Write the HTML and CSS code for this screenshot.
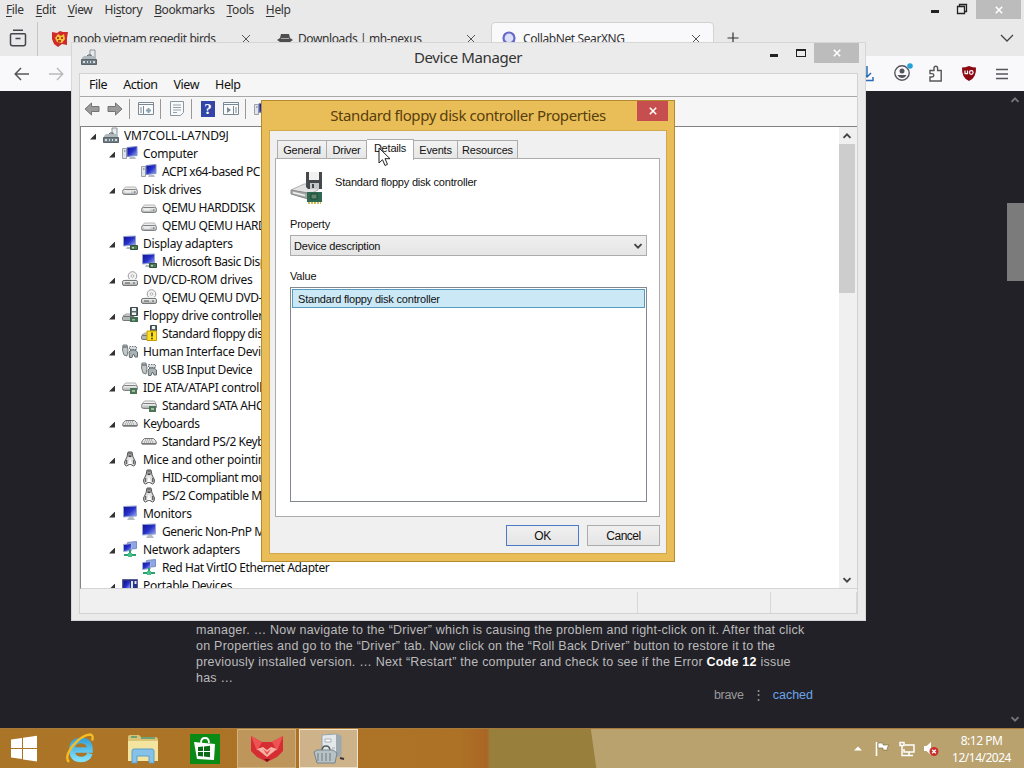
FILE: index.html
```html
<!DOCTYPE html>
<html lang="en">
<head>
    <meta charset="UTF-8" />
    <meta name="viewport" content="width=device-width, initial-scale=1.0">
    <title>Device Manager</title>
    <link rel="stylesheet" href="styles.css">
</head>
<body>
    <!-- Shared icons -->
    <svg class="sprite" width="0" height="0">
        <defs>
            <linearGradient id="screen" x1="0" y1="0" x2="1" y2="1">
                <stop offset="0" stop-color="#10108e" />
                <stop offset="0.5" stop-color="#2630c8" />
                <stop offset="1" stop-color="#9db4f4" />
            </linearGradient>
            <linearGradient id="metal" x1="0" y1="0" x2="0" y2="1">
                <stop offset="0" stop-color="#fafafa" />
                <stop offset="1" stop-color="#a4a8aa" />
            </linearGradient>
            <linearGradient id="ie" x1="0" y1="0" x2="0" y2="1">
                <stop offset="0" stop-color="#3aa5dc" />
                <stop offset="1" stop-color="#7fe0fa" />
            </linearGradient>
            <symbol id="i-root" viewBox="0 0 16 16">
                <path d="M9 7V1h5v8" fill="#e6eaec" stroke="#8b9499" />
                <path d="M5 9l2-3h3l1 3" fill="none" stroke="#4d585e" />
                <path d="M1 9l2-2h10l2 2v2H1z" fill="#aeb8bd" />
                <path d="M.5 10.5h15v5H.5z" fill="#707c83" stroke="#59656b" />
                <path d="M2 13h2m2 0h1m2 0h1m2 0h2" stroke="#d4dcdf" stroke-width="2" />
            </symbol>
            <symbol id="i-computer" viewBox="0 0 16 16">
                <path d="M.5 3.5h4v10h-4z" fill="#e1e4e6" stroke="#9aa0a4" />
                <path d="M2 6h1.500" stroke="#666" />
                <path d="M5 2.500l10-1v9l-10 1z" fill="url(#screen)" stroke="#7d8fc0" />
                <path d="M8 12h5l1 2H7z" fill="#b6bcc4" />
            </symbol>
            <symbol id="i-monitor" viewBox="0 0 16 16">
                <path d="M1.500 1.500l13-.5v10l-13 1z" fill="url(#screen)" stroke="#98a6cf" />
                <path d="M7 12h4l2 3H5z" fill="#b5bbc4" />
            </symbol>
            <symbol id="i-display" viewBox="0 0 16 16">
                <path d="M1.500 1.500l12-.5v9l-12 1z" fill="url(#screen)" stroke="#98a6cf" />
                <path d="M5 12h4v2H4z" fill="#b5bbc4" />
                <path d="M8.500 10.500h7v4h-7z" fill="#4d7a52" stroke="#33503a" />
                <path d="M10 12h2v1.500h-2z" fill="#b9cfb6" />
            </symbol>
            <symbol id="i-disk" viewBox="0 0 16 16">
                <path d="M1 9l2.500-3h10L15 9z" fill="#ededed" stroke="#b5b5b5" />
                <rect x=".5" y="8.500" width="15" height="5" rx="2" fill="url(#metal)" stroke="#808080" />
                <path d="M3 11h6" stroke="#fff" />
                <path d="M12 11h1.500" stroke="#555" />
            </symbol>
            <symbol id="i-dvd" viewBox="0 0 16 16">
                <circle cx="10.500" cy="5" r="4.300" fill="#f2f2f2" stroke="#9c9c9c" />
                <circle cx="10.500" cy="5" r="1.300" fill="#fff" stroke="#b2b2b2" />
                <path d="M1 10l3-2h9l2 2z" fill="#ededed" />
                <rect x=".5" y="9.500" width="15" height="5" rx="1.500" fill="url(#metal)" stroke="#777" />
                <path d="M3 12h5m3 0h2" stroke="#555" />
            </symbol>
            <symbol id="i-floppy" viewBox="0 0 16 16">
                <path d="M1 9l3-2h6v2z" fill="#e8e8e8" stroke="#999" />
                <rect x=".5" y="9.500" width="12" height="4" rx="1" fill="#b2b8b5" stroke="#777" />
                <path d="M8.500.5h7v8h-7z" fill="#596a6a" stroke="#3d4949" />
                <path d="M10 1h4v3h-4zM10 5.500h4V8h-4z" fill="#eef1f1" />
                <path d="M8 10h8v5H8z" fill="#3d6c50" />
                <path d="M10 12h3v1.500h-3z" fill="#9abda0" />
            </symbol>
            <symbol id="i-warn" viewBox="0 0 16 16">
                <path d="M1 10l3-2h6v2z" fill="#e8e8e8" stroke="#999" />
                <rect x=".5" y="10.500" width="10" height="4" rx="1" fill="#b2b8b5" stroke="#777" />
                <path d="M9.500.5h6v7h-6z" fill="#596a6a" stroke="#3d4949" />
                <path d="M11 1h3v3h-3z" fill="#eef1f1" />
                <path d="M6 6h9.500v9.500H6z" fill="#fde01c" stroke="#c69a00" />
                <path d="M11 7.500v4m0 1.200v1.500" stroke="#222" stroke-width="1.500" />
            </symbol>
            <symbol id="i-hid" viewBox="0 0 16 16">
                <path d="M1 2h4l1 5-1 6-3-1-1.500-5z" fill="#c2c8ca" stroke="#757d80" />
                <path d="M1 4h4" stroke="#555" />
                <path d="M7.500 3.500h7v3h-7z" fill="#d7dcde" stroke="#707a7e" stroke-dasharray="1.500 1" />
                <path d="M7 9l2-2h4l2.500 2v5H13l-1-2.500h-1L10 14.500H7.500z" fill="#aab2b5" stroke="#606a6e" />
            </symbol>
            <symbol id="i-ide" viewBox="0 0 16 16">
                <path d="M1 7l2.500-3h10L15 7z" fill="#f2f2f2" stroke="#adadad" />
                <rect x=".5" y="6.500" width="15" height="5" rx="2" fill="url(#metal)" stroke="#808080" />
                <path d="M8 9h7v6H8z" fill="#4d7658" />
                <path d="M10 11h3v2h-3z" fill="#9ebda2" />
            </symbol>
            <symbol id="i-keyboard" viewBox="0 0 16 16">
                <path d="M3.500 5.500h9q3 2 3 5H.5q0-3 3-5z" fill="#e2e2e2" stroke="#777" />
                <path d="M4 7h8M3 9h10" stroke="#888" stroke-dasharray="1 1" />
                <path d="M1 11.500h14" stroke="#9b9b9b" />
            </symbol>
            <symbol id="i-mouse" viewBox="0 0 16 16">
                <path d="M6 1h4l1 5 2.500 5q0 4-2 4L8 13l-3.500 2q-2 0-2-4L5 6z" fill="#dedede" stroke="#555" />
                <path d="M8 7l2 6H6z" fill="#fff" />
                <path d="M4.500 9v4M11.700 9v4" stroke="#666" stroke-width="1.500" fill="none" />
                <path d="M6.500 1.500h3V6h-3z" fill="#444" />
                <path d="M8 2.500v2" stroke="#fff" />
            </symbol>
            <symbol id="i-network" viewBox="0 0 16 16">
                <path d="M5.500 1.500l9-1v7l-9 1z" fill="#8da7e6" stroke="#7c8fc2" />
                <path d="M1.500 3.500l8-1v7l-8 1z" fill="url(#screen)" stroke="#a5b3d8" />
                <path d="M8 9v4M2 14h12" stroke="#2ba069" stroke-width="2" />
                <path d="M6 12h4v4H6z" fill="#46c189" />
            </symbol>
            <symbol id="i-portable" viewBox="0 0 16 16">
                <path d="M.5 2.500h15v12H.5z" fill="#28318c" stroke="#596188" />
                <path d="M2 4h6v8H2z" fill="url(#screen)" />
                <path d="M9 4h2v9H9zM12.500 4h2v3h-2z" fill="#e1e5ee" />
            </symbol>
            <symbol id="i-x" viewBox="0 0 10 10">
                <path d="M1 1l8 8M9 1L1 9" fill="none" stroke="currentColor" />
            </symbol>
            <symbol id="i-chevron" viewBox="0 0 10 10">
                <path d="M1.500 3.200L5 6.700l3.500-3.500" fill="none" stroke="currentColor" stroke-width="1.900" />
            </symbol>
        </defs>
    </svg>

    <div class="desktop">
        <div class="browser">
            <div class="menubar">
                <span><u>F</u>ile</span>
                <span><u>E</u>dit</span>
                <span><u>V</u>iew</span>
                <span>Hi<u>s</u>tory</span>
                <span><u>B</u>ookmarks</span>
                <span><u>T</u>ools</span>
                <span><u>H</u>elp</span>
                <div class="window-buttons browser-buttons">
                    <i class="minimize"></i>
                    <svg width="12" height="12"><path d="M1.500 3.500h7v7h-7zM3.500 3V1.500h7v7H9" fill="none" stroke="#222" stroke-width="1.300" /></svg>
                    <b class="close"><svg width="8" height="8"><use href="#i-x" stroke-width="2" /></svg></b>
                </div>
            </div>

            <div class="tabstrip">
                <div class="view-button">
                    <svg width="18" height="18" viewBox="0 0 18 18" fill="none" stroke="#45454d" stroke-width="1.500"><path d="M4 1.200h10M2.500 4.700h13q1 0 1 1v9q0 2-2 2h-11q-2 0-2-2v-9q0-1 1-1zM6.500 9.500h5" /></svg>
                </div>
                <div class="tab">
                    <svg width="16" height="16" viewBox="0 0 16 16"><path d="M0 1l5 1 3-2 3 1 5 0-1 6 0 7-5-1-4 3-4-3-2-5z" fill="#cf2b2b" /><path d="M3 7l3-4 3 2 3-2 1 5-3 4-5-1z" fill="#f4c33a" /><path d="M5 7h2m2 0h2M6 10h3" stroke="#a11b1b" stroke-width="1.500" /></svg>
                    <span class="tab-text">noob vietnam regedit birds</span>
                    <svg class="tab-close" width="10" height="10"><use href="#i-x" /></svg>
                </div>
                <div class="tab tab-two">
                    <svg width="16" height="16" viewBox="0 0 16 16"><path d="M4 3h8l1 4H3zM0 9q3-3 8-2 5-1 8 2l-3 2H3z" fill="#4d4d4f" /><path d="M4 7.500h8" stroke="#aaa" /></svg>
                    <span class="tab-text">Downloads | mh-nexus</span>
                    <svg class="tab-close" width="10" height="10"><use href="#i-x" /></svg>
                </div>
                <div class="tab active">
                    <svg width="16" height="16" viewBox="0 0 16 16"><circle cx="7" cy="7" r="5.500" fill="#dce0fa" stroke="#6869c9" stroke-width="2.200" /><path d="M11 11l4 4" stroke="#4548b8" stroke-width="2.500" /></svg>
                    <span class="tab-text">CollabNet SearXNG</span>
                    <svg class="tab-close" width="10" height="10"><use href="#i-x" /></svg>
                </div>
                <svg class="new-tab" width="12" height="12"><path d="M6 .5v11M.5 6h11" stroke="#333" stroke-width="1.200" /></svg>
                <svg class="all-tabs" width="14" height="8"><path d="M1 1l6 6 6-6" fill="none" stroke="#444" stroke-width="1.300" /></svg>
            </div>

            <div class="navbar">
                <svg width="16" height="14" viewBox="0 0 16 14" fill="none" stroke="#55555c" stroke-width="1.500"><path d="M15 7H1.500M7 1L1.200 7 7 13" /></svg>
                <svg class="forward" width="16" height="14" viewBox="0 0 16 14" fill="none" stroke="#b9b9bd" stroke-width="1.400"><path d="M1 7h13.500M9 1l5.800 6L9 13" /></svg>
                <div class="nav-right">
                    <svg width="14" height="16" viewBox="0 0 14 16" fill="none" stroke="#2a6cb8" stroke-width="1.500"><path d="M7 0v11M3 7l4 4 4-4M1 11v3.500h12V11" /></svg>
                    <svg class="account" width="20" height="20" viewBox="0 0 20 20"><circle cx="9" cy="11" r="7.200" fill="none" stroke="#55555c" stroke-width="1.400" /><circle cx="9" cy="9" r="2.500" fill="#55555c" /><path d="M4.500 13h9q-1.500 3-4.500 3t-4.500-3z" fill="#55555c" /><circle cx="17" cy="4" r="2.800" fill="#26a0d8" /></svg>
                    <svg class="puzzle" width="16" height="17" viewBox="0 0 16 17" fill="none" stroke="#55555c" stroke-width="1.400"><path d="M2 5.500h4V3q0-1.800 1.800-1.800T9.600 3v2.500h3.600V16H2v-4h2q1.800 0 1.800-1.700T4 8.600H2z" /></svg>
                    <svg class="ublock" width="16" height="17" viewBox="0 0 16 17"><path d="M8 1q4 1.500 7 1.500Q15.500 13 8 16 .5 13 1 2.500 4 2.500 8 1z" fill="#8c0812" /><path d="M4 5.500v3.200h2.500V5.500" fill="none" stroke="#fff" stroke-width="1.200" /><circle cx="10.300" cy="7.500" r="1.800" fill="none" stroke="#fff" stroke-width="1.200" /></svg>
                    <svg class="burger" width="12" height="12"><path d="M0 1.500h12M0 6h12M0 10.500h12" stroke="#55555c" stroke-width="1.300" /></svg>
                </div>
            </div>

            <div class="page">
                <div class="result">
                    <p>
                        <span class="line">manager. … Now navigate to the “Driver” which is causing the problem and right-click on it. After that click</span>
                        <span class="line">on Properties and go to the “Driver” tab. Now click on the “Roll Back Driver” button to restore it to the</span>
                        <span class="line">previously installed version. … Next “Restart” the computer and check to see if the Error <strong>Code 12</strong> issue</span>
                        <span class="line">has …</span>
                    </p>
                    <div class="engines"><span>brave</span><i>⋮</i><a>cached</a></div>
                </div>
                <div class="page-scroll">
                    <svg class="flip" width="10" height="10"><use href="#i-chevron" /></svg>
                    <div class="page-thumb"></div>
                    <svg width="10" height="10"><use href="#i-chevron" /></svg>
                </div>
            </div>
        </div>

        <!-- Device Manager window -->
        <div class="devmgr">
            <div class="titlebar">
                <svg class="title-icon" width="16" height="16"><use href="#i-root" /></svg>
                <span class="title">Device Manager</span>
                <div class="window-buttons">
                    <i class="minimize"></i>
                    <i class="maximize"></i>
                    <b class="close"><svg width="8" height="8"><use href="#i-x" stroke-width="2" /></svg></b>
                </div>
            </div>
            <div class="client">
                <div class="app-menu"><span>File</span><span>Action</span><span>View</span><span>Help</span></div>
                <div class="toolbar">
                    <svg width="16" height="16"><path d="M1 8l6.500-6v3.500H15v5H7.500V14z" fill="#9b9b9b" stroke="#747474" /></svg>
                    <svg class="tb-forward" width="16" height="16"><path d="M15 8L8.500 2v3.500H1v5h7.500V14z" fill="#9b9b9b" stroke="#747474" /></svg>
                    <i class="sep"></i>
                    <svg width="16" height="16"><path d="M.5 1.500h15v12H.5z" fill="#f9fafb" stroke="#7d8992" /><path d="M1 3.500h14M5.500 5v9M2 7h2M2 9h2M2 11h2" stroke="#7d8992" /><path d="M8 9.500h5M10.500 7v5" stroke="#8aa1b2" stroke-width="2" /></svg>
                    <i class="sep"></i>
                    <svg width="16" height="16"><path d="M1.500.5h13v11l-3 3h-10z" fill="#f9fafb" stroke="#8c969d" /><path d="M4 4h8M4 6.500h8M4 9h8M4 11.500h4" stroke="#95a1a9" /></svg>
                    <i class="sep"></i>
                    <span class="help">?</span>
                    <svg class="tb-panel" width="16" height="16"><path d="M.5 1.500h15v12H.5z" fill="#f9fafb" stroke="#7d8992" /><path d="M1 3.500h14M10.500 5v9M12 7h2M12 9h2M12 11h2" stroke="#7d8992" /><path d="M4 6l4 3-4 3z" fill="#7a8a96" /></svg>
                    <i class="sep"></i>
                    <svg width="16" height="16"><use href="#i-computer" /></svg>
                </div>
                <div class="tree-wrap">
                    <ul class="tree">
                        <li class="root"><i></i><svg><use href="#i-root" /></svg>VM7COLL-LA7ND9J</li>
                        <li class="group"><i></i><svg><use href="#i-computer" /></svg>Computer</li>
                        <li class="device"><svg><use href="#i-computer" /></svg>ACPI x64-based PC</li>
                        <li class="group"><i></i><svg><use href="#i-disk" /></svg>Disk drives</li>
                        <li class="device"><svg><use href="#i-disk" /></svg>QEMU HARDDISK</li>
                        <li class="device"><svg><use href="#i-disk" /></svg>QEMU QEMU HARDDISK</li>
                        <li class="group"><i></i><svg><use href="#i-display" /></svg>Display adapters</li>
                        <li class="device"><svg><use href="#i-display" /></svg>Microsoft Basic Display Adapter</li>
                        <li class="group"><i></i><svg><use href="#i-dvd" /></svg>DVD/CD-ROM drives</li>
                        <li class="device"><svg><use href="#i-dvd" /></svg>QEMU QEMU DVD-ROM</li>
                        <li class="group"><i></i><svg><use href="#i-floppy" /></svg>Floppy drive controllers</li>
                        <li class="device"><svg><use href="#i-warn" /></svg>Standard floppy disk controller</li>
                        <li class="group"><i></i><svg><use href="#i-hid" /></svg>Human Interface Devices</li>
                        <li class="device"><svg><use href="#i-hid" /></svg>USB Input Device</li>
                        <li class="group"><i></i><svg><use href="#i-ide" /></svg>IDE ATA/ATAPI controllers</li>
                        <li class="device"><svg><use href="#i-ide" /></svg>Standard SATA AHCI Controller</li>
                        <li class="group"><i></i><svg><use href="#i-keyboard" /></svg>Keyboards</li>
                        <li class="device"><svg><use href="#i-keyboard" /></svg>Standard PS/2 Keyboard</li>
                        <li class="group"><i></i><svg><use href="#i-mouse" /></svg>Mice and other pointing devices</li>
                        <li class="device"><svg><use href="#i-mouse" /></svg>HID-compliant mouse</li>
                        <li class="device"><svg><use href="#i-mouse" /></svg>PS/2 Compatible Mouse</li>
                        <li class="group"><i></i><svg><use href="#i-monitor" /></svg>Monitors</li>
                        <li class="device"><svg><use href="#i-monitor" /></svg>Generic Non-PnP Monitor</li>
                        <li class="group"><i></i><svg><use href="#i-network" /></svg>Network adapters</li>
                        <li class="device"><svg><use href="#i-network" /></svg>Red Hat VirtIO Ethernet Adapter</li>
                        <li class="group"><i></i><svg><use href="#i-portable" /></svg>Portable Devices</li>
                    </ul>
                    <div class="scrollbar">
                        <svg class="flip" width="10" height="10"><use href="#i-chevron" /></svg>
                        <div class="thumb"></div>
                        <svg width="10" height="10"><use href="#i-chevron" /></svg>
                    </div>
                </div>
                <div class="statusbar"><span></span><span></span><span></span></div>
            </div>
        </div>

        <!-- Properties dialog -->
        <div class="dialog">
            <div class="dialog-title">
                Standard floppy disk controller Properties
                <b class="dialog-close"><svg width="8" height="8"><use href="#i-x" stroke-width="2" /></svg></b>
            </div>
            <div class="dialog-body">
                <div class="prop-tabs">
                    <span class="t-general">General</span>
                    <span class="t-driver">Driver</span>
                    <span class="t-details">Details</span>
                    <span class="t-events">Events</span>
                    <span class="t-resources">Resources</span>
                </div>
                <div class="panel">
                    <div class="device-head">
                        <svg width="34" height="34" viewBox="0 0 34 34">
                            <path d="M1 19l13-6h14v6l-10 5z" fill="#e3e3e3" stroke="#b0b0b0" />
                            <path d="M1 19l17 3v6L1 23z" fill="#a4a8a8" stroke="#8a8a8a" />
                            <path d="M3 21.500l12 3" stroke="#f2f2f2" stroke-width="1.500" />
                            <path d="M16 1h16v17H18l-2-2z" fill="#45494c" />
                            <path d="M19 1h10v8H19z" fill="#f1f1f1" />
                            <path d="M20 12h9v6h-9z" fill="#c3c7c9" />
                            <path d="M22 13h2v4h-2z" fill="#45494c" />
                            <path d="M17 21h15v10H17z" fill="#2f6850" />
                            <path d="M21 23h6v5h-6z" fill="#63866a" stroke="#1f4838" />
                            <path d="M18 32h13" stroke="#d1b956" stroke-width="2" stroke-dasharray="2 1" />
                        </svg>
                        <span>Standard floppy disk controller</span>
                    </div>
                    <label>Property</label>
                    <div class="select">Device description<svg width="10" height="10"><use href="#i-chevron" /></svg></div>
                    <label class="value-label">Value</label>
                    <div class="listbox"><div class="selected">Standard floppy disk controller</div></div>
                </div>
                <div class="actions"><button class="default">OK</button><button>Cancel</button></div>
            </div>
        </div>

        <div class="taskbar">
            <div class="apps">
                <svg class="start" width="28" height="28" viewBox="0 0 28 28" fill="#fff"><path d="M1 4.500l11-1.600V13H1zM13 2.700L27 .8V13H13zM1 14h11v10L1 22.500zM13 14h14v12.500l-14-2z" /></svg>
                <svg class="ie" width="32" height="32" viewBox="0 0 32 32"><path d="M25 20.500q-2 6-9 6-9 0-9-9.500t9-9.500q9 0 9 9.500H10" fill="none" stroke="url(#ie)" stroke-width="5.500" /><path d="M4 29Q-1 24 8 12.500 17 2 25 1.500q4 .5 2 6" fill="none" stroke="#f6bd22" stroke-width="2.300" /></svg>
                <svg class="explorer" width="32" height="30" viewBox="0 0 32 30"><path d="M1 3q0-2 2-2h9l2 2h14q3 0 3 3v21H1z" fill="#d9c374" /><path d="M4 3h6M14 4h14" stroke="#6da377" stroke-width="2" /><path d="M1 7h30v20H1z" fill="#f3e4a0" /><path d="M5 29V17q0-2 2-2h18q2 0 2 2v12h-5v-7H10v7z" fill="#86c2e8" stroke="#5d9ec9" /></svg>
                <svg class="store" width="30" height="30" viewBox="0 0 30 30"><path d="M0 0h30v30H0z" fill="#0c8a16" /><path d="M11 9q0-5 4-5t4 5" fill="none" stroke="#fff" stroke-width="1.800" /><path d="M4 8l21 2-1 16-17-1z" fill="#fff" /><path d="M8 13l5-.5v4.500H8zM14 12.400l6-.6V17h-6zM8 18h5v4.500L8 22zM14 18h6v5.200l-6-.6z" fill="#0c6a16" /></svg>
                <div class="task fox-task">
                    <svg width="34" height="28" viewBox="0 0 34 28"><path d="M1 1l11 6h10l11-6v15l-6 6-10 5-10-5-6-6z" fill="#d52d32" /><path d="M1 1l11 6-5 9zM33 1L22 7l5 9z" fill="#ee5353" /><path d="M7 14l6-2 4 3 4-3 6 2-10 8z" fill="#f7b2a5" /><path d="M13 14l4 3 4-3-4 6z" fill="#e5504d" /><path d="M14 24h6l-3 3z" fill="#7a1019" /></svg>
                </div>
                <div class="task current">
                    <svg width="32" height="32" viewBox="0 0 32 32"><path d="M9 2l14-1 5 2v20H9z" fill="#e3e9eb" stroke="#9aa5a9" /><path d="M23 1v22h5V3z" fill="#9da9ae" /><path d="M12 6h6v3h-6zM19 15h3" fill="#fff" stroke="#a4aeb2" /><path d="M9 18q0-5 4-5t4 5" fill="none" stroke="#515c61" stroke-width="1.500" /><path d="M1 19l3-2h16l4 3-2 10H4z" fill="#b7c2c6" stroke="#76848a" /><path d="M5 20v8m4-8v8m4-8v8m4-8v8" stroke="#6c7a80" /><path d="M27 25l4 1" stroke="#333" stroke-width="2" /></svg>
                </div>
            </div>
            <div class="tray">
                <svg class="tray-up" width="8" height="5"><path d="M4 .5L8 4.500H0z" fill="#fff" /></svg>
                <svg class="flag" width="16" height="16"><path d="M2.500 1v14" stroke="#fff" stroke-width="1.600" /><path d="M4 2h5v2h6l-2 3 1 2H9V7H4z" fill="#fff" stroke="#77653d" stroke-width=".6" /></svg>
                <svg class="lan" width="16" height="16" fill="none" stroke="#fff" stroke-width="1.500"><path d="M6 4h9v7H5V8M10 11v3M6 14.500h8" /><path d="M1 1.500h4v3H1zM3 5v9.500h3" /></svg>
                <svg class="volume" width="16" height="16"><path d="M1 5h2.500L8 1v13l-4.500-4H1z" fill="#fff" /><circle cx="11" cy="10.500" r="4.500" fill="#c9302c" /><path d="M9.200 8.700l3.600 3.600M12.800 8.700l-3.600 3.600" stroke="#fff" stroke-width="1.300" /></svg>
                <div class="clock"><span>8:12 PM</span><span>12/14/2024</span></div>
            </div>
        </div>

        <svg class="cursor" width="13" height="20" viewBox="0 0 13 20"><path d="M1 1v15l3.500-3.300L7 18.500l2.500-1.200L7 11.700h5z" fill="#fff" stroke="#222" /></svg>
    </div>
</body>
</html>
```
FILE: styles.css
```css
* {
    box-sizing: border-box;
}

body {
    margin: 0;
    font-family: "Noto Sans", sans-serif;
    font-size: 12px;
    color: #111;
}

svg {
    display: block;
    flex: none;
}

.sprite {
    position: absolute;
}

.flip {
    transform: scaleY(-1);
}

.desktop {
    position: relative;
    width: 1024px;
    height: 768px;
    overflow: hidden;
    display: flex;
    flex-direction: column;
}

/* Browser */
.browser {
    height: 728px;
    display: flex;
    flex-direction: column;
    background: #e9e9e9;
}

.menubar {
    height: 22px;
    padding-left: 6px;
    display: flex;
    gap: 12px;
    line-height: 20px;
    font-size: 12px;
    letter-spacing: -0.38px;
    color: #333;
}

.menubar u {
    text-underline-offset: 2px;
}

.window-buttons {
    margin-left: auto;
    display: flex;
    align-items: flex-start;
}

.minimize {
    width: 8px;
    height: 3px;
    margin: 11px 18px 0 0;
    background: #222;
}

.maximize {
    width: 10px;
    height: 8px;
    margin: 6px 8px 0 0;
    border: 1px solid #222;
    border-top-width: 2px;
}

.close {
    width: 45px;
    height: 20px;
    display: flex;
    align-items: center;
    justify-content: center;
    background: #bcbcbc;
    color: #fff;
}

.browser-buttons {
    margin-right: 3px;
}

.browser-buttons .minimize {
    margin: 10px 17px 0 0;
}

.browser-buttons svg {
    margin: 3px 8px 0 0;
}

.browser-buttons .close svg {
    margin: 0;
}

.browser-buttons .close {
    height: 19px;
}

.tabstrip {
    height: 34px;
    display: flex;
    align-items: flex-start;
}

.view-button {
    width: 38px;
    height: 34px;
    padding: 7px 0 0 9px;
    border-right: 1px solid #c4c4c4;
}

.tab {
    width: 226px;
    height: 33px;
    padding: 0 13px 0 14px;
    display: flex;
    align-items: center;
    color: #333;
}

.tab-two {
    padding-left: 13px;
    width: 227px;
}

.tab-two .tab-close {
    margin-right: 2px;
}

.tab-text {
    flex: 1;
    padding-left: 5px;
    white-space: nowrap;
    letter-spacing: -0.4px;
}

.tab-close {
    color: #555;
}

.active {
    width: 223px;
    padding: 0 12px 0 10px;
    border: 1px solid #d2d2d2;
    border-radius: 4px 4px 0 0;
    background: #f9f9fb;
}

.new-tab {
    margin: 10px 0 0 13px;
}

.all-tabs {
    margin: 12px 10px 0 auto;
}

.navbar {
    height: 35px;
    padding: 0 16px 0 14px;
    display: flex;
    align-items: center;
    background: #f9f9fb;
}

.forward {
    margin-left: 18px;
}

.nav-right {
    margin-left: auto;
    display: flex;
    align-items: center;
}

.account {
    margin: -4px 0 0 19px;
}

.puzzle {
    margin-left: 15px;
}

.ublock {
    margin-left: 17px;
}

.burger {
    margin-left: 19px;
}

.page {
    height: 637px;
    display: flex;
    justify-content: space-between;
    align-items: stretch;
    background: #222128;
}

.result {
    width: 617px;
    margin: 531px 0 0 196px;
    font-family: "Liberation Sans", sans-serif;
    font-size: 12.500px;
    line-height: 16px;
    color: #bbb;
}

.result p {
    margin: 0;
}

.line {
    display: block;
    white-space: nowrap;
    letter-spacing: 0.23px;
}

.result strong {
    color: #fff;
}

.engines {
    margin-top: 1px;
    display: flex;
    justify-content: flex-end;
    color: #999;
}

.engines i {
    width: 29px;
    text-align: center;
    font-style: normal;
}

.engines span {
    letter-spacing: -0.3px;
}

.engines a {
    color: #6ba4e8;
}

.page-scroll {
    width: 17px;
    padding: 4px 0;
    display: flex;
    flex-direction: column;
    justify-content: space-between;
    color: #777;
}

.page-scroll svg {
    margin-left: 3px;
}

.page-thumb {
    height: 78px;
    margin: 98px 0 auto;
    background: #7b7b7b;
}

/* Device Manager */
.devmgr {
    position: absolute;
    left: 71px;
    top: 42px;
    width: 795px;
    height: 579px;
    padding: 0 7px 6px;
    border: 1px solid #d6d6d6;
    background: #ebebeb;
}

.titlebar {
    height: 30px;
    margin-right: -1px;
    display: flex;
    align-items: flex-start;
}

.title-icon {
    margin: 6px 0 0 2px;
}

.title {
    margin-left: 317px;
    font-size: 15px;
    line-height: 29px;
    letter-spacing: -0.4px;
    color: #333;
}

.client {
    height: 541px;
    display: flex;
    flex-direction: column;
    border: 1px solid #d2d2d2;
    background: #f0f0f0;
}

.app-menu {
    height: 22px;
    padding-left: 9px;
    display: flex;
    gap: 16px;
    line-height: 21px;
    font-size: 12.500px;
    letter-spacing: -0.45px;
    background: #f6f6f6;
}

.toolbar {
    height: 30px;
    padding: 0 0 5px 4px;
    display: flex;
    align-items: center;
    border-top: 1px solid #a8a8a8;
    background: #f6f6f6;
}

.tb-forward {
    margin-left: 7px;
}

.sep {
    width: 1px;
    height: 20px;
    margin: 0 8px 0 6px;
    background: #999;
}

.help {
    width: 14px;
    height: 16px;
    margin: 0 8px 0 1px;
    background: #3346a8;
    color: #fff;
    font: bold 15px/16px "Liberation Serif", serif;
    text-align: center;
}

.tree-wrap {
    height: 463px;
    display: flex;
    border: 1px solid #828282;
    border-width: 1px 0 1px 1px;
    border-bottom-color: #d5d5d5;
    background: #fff;
}

.tree {
    flex: 1;
    margin: -1px 0 0;
    padding: 0;
    list-style: none;
    overflow: hidden;
}

.tree li {
    height: 18px;
    display: flex;
    align-items: center;
    white-space: nowrap;
}

.tree svg {
    width: 16px;
    height: 16px;
    margin-right: 5px;
}

.tree i {
    width: 6px;
    height: 6px;
    margin: 3px 7px 0 0;
    background: #333;
    clip-path: polygon(100% 0, 100% 100%, 0 100%);
}

.root {
    padding-left: 9px;
    letter-spacing: -0.15px;
}

.group {
    padding-left: 28px;
    letter-spacing: -0.28px;
}

.device {
    padding-left: 60px;
    letter-spacing: -0.44px;
}

.scrollbar {
    width: 18px;
    padding: 4px 2px 3px 0;
    display: flex;
    flex-direction: column;
    justify-content: space-between;
    background: #f0f0f0;
    color: #444;
}

.scrollbar svg {
    margin-left: 3px;
}

.thumb {
    height: 149px;
    margin: 3px 0 auto;
    background: #cdcdcd;
}

.statusbar {
    height: 21px;
    margin: 3px 0 0;
    display: flex;
}

.statusbar span {
    width: 86px;
    border-right: 1px solid #d7d7d7;
}

.statusbar span:nth-child(1) {
    width: 559px;
}

.statusbar span:nth-child(2) {
    width: 133px;
}

/* Properties dialog */
.dialog {
    position: absolute;
    z-index: 1;
    left: 261px;
    top: 100px;
    width: 414px;
    height: 462px;
    padding: 0 7px 7px;
    border: 1px solid #b38a2d;
    background: #e9bd58;
    font-family: "Liberation Sans", sans-serif;
    font-size: 11px;
    letter-spacing: -0.2px;
}

.dialog-title {
    position: relative;
    height: 29px;
    font-family: "Noto Sans", sans-serif;
    font-size: 15px;
    line-height: 29px;
    letter-spacing: -0.42px;
    text-align: center;
    color: #573f0c;
}

.dialog-close {
    position: absolute;
    right: -1px;
    top: 0;
    width: 31px;
    height: 20px;
    display: flex;
    align-items: center;
    justify-content: center;
    background: #c74e4e;
    color: #fff;
}

.dialog-body {
    height: 424px;
    padding: 7px 6px 0 5px;
    border: 1px solid #d1a84b;
    background: #f0f0f0;
}

.prop-tabs {
    height: 21px;
    padding-left: 2px;
    display: flex;
    align-items: flex-end;
}

.prop-tabs span {
    height: 19px;
    border: 1px solid #acacac;
    border-left-width: 0;
    background: linear-gradient(#f2f2f2, #e6e6e6);
    line-height: 18px;
    text-align: center;
}

.prop-tabs .t-general {
    width: 50px;
    border-left-width: 1px;
}

.prop-tabs .t-driver {
    width: 40px;
}

.prop-tabs .t-details {
    width: 47px;
    height: 21px;
    margin-bottom: -1px;
    border-bottom: 0;
    background: #fff;
    line-height: 17px;
    z-index: 1;
}

.prop-tabs .t-events {
    width: 44px;
}

.prop-tabs .t-resources {
    width: 60px;
}

.panel {
    height: 359px;
    margin-top: -1px;
    padding: 12px 12px 0 14px;
    border: 1px solid #acacac;
    background: #fff;
}

.device-head {
    height: 47px;
    display: flex;
}

.device-head span {
    margin: 5px 0 0 11px;
}

.panel label {
    display: block;
    height: 17px;
    line-height: 12px;
}

.select {
    height: 21px;
    padding: 0 3px;
    display: flex;
    align-items: center;
    justify-content: space-between;
    border: 1px solid #acacac;
    background: linear-gradient(#efefef, #e5e5e5);
}

.select svg {
    color: #444;
}

.panel .value-label {
    margin-top: 14px;
}

.listbox {
    height: 215px;
    padding: 1px;
    border: 1px solid #828790;
}

.selected {
    height: 19px;
    padding-left: 5px;
    border: 1px solid #559bbd;
    background: #cbe8f6;
    line-height: 18px;
}

.actions {
    margin-top: 8px;
    display: flex;
    justify-content: flex-end;
    gap: 8px;
}

.actions button {
    width: 73px;
    height: 21px;
    padding: 0;
    border: 1px solid #acacac;
    background: linear-gradient(#f0f0f0, #e5e5e5);
    font: 12px "Liberation Sans", sans-serif;
    letter-spacing: -0.5px;
    color: #111;
}

.actions .default {
    border: 1px solid #4a7ac8;
}

/* Taskbar */
.taskbar {
    height: 40px;
    display: flex;
    justify-content: space-between;
    background:
        linear-gradient(82deg, transparent 590px, #b9a26e 591px),
        linear-gradient(90deg, #ab7528 0, #ad7225 460px, #aa6525 487px, #98803c 490px, #9b7b3d 100%);
    border-top: 1px solid #a57a3a;
}

.apps {
    display: flex;
    align-items: center;
}

.start {
    margin-left: 10px;
}

.ie {
    margin-left: 27px;
}

.explorer {
    margin-left: 30px;
}

.store {
    margin-left: 31px;
}

.task {
    width: 59px;
    height: 39px;
    display: flex;
    align-items: center;
    justify-content: center;
    border: 1px solid #d2b27c;
    background: #be955b;
}

.fox-task {
    margin-left: 17px;
}

.current {
    margin-left: 3px;
    border-color: #f0e3cb;
    background: #cdb28a;
}

.tray {
    display: flex;
    align-items: center;
    color: #fff;
}

.flag {
    margin-left: 12px;
}

.lan {
    margin-left: 9px;
}

.volume {
    margin-left: 8px;
}

.clock {
    width: 85px;
    display: flex;
    flex-direction: column;
    align-items: center;
    line-height: 17px;
    font-size: 12px;
    letter-spacing: -0.5px;
}

.cursor {
    position: absolute;
    z-index: 2;
    left: 378px;
    top: 147px;
}
```
